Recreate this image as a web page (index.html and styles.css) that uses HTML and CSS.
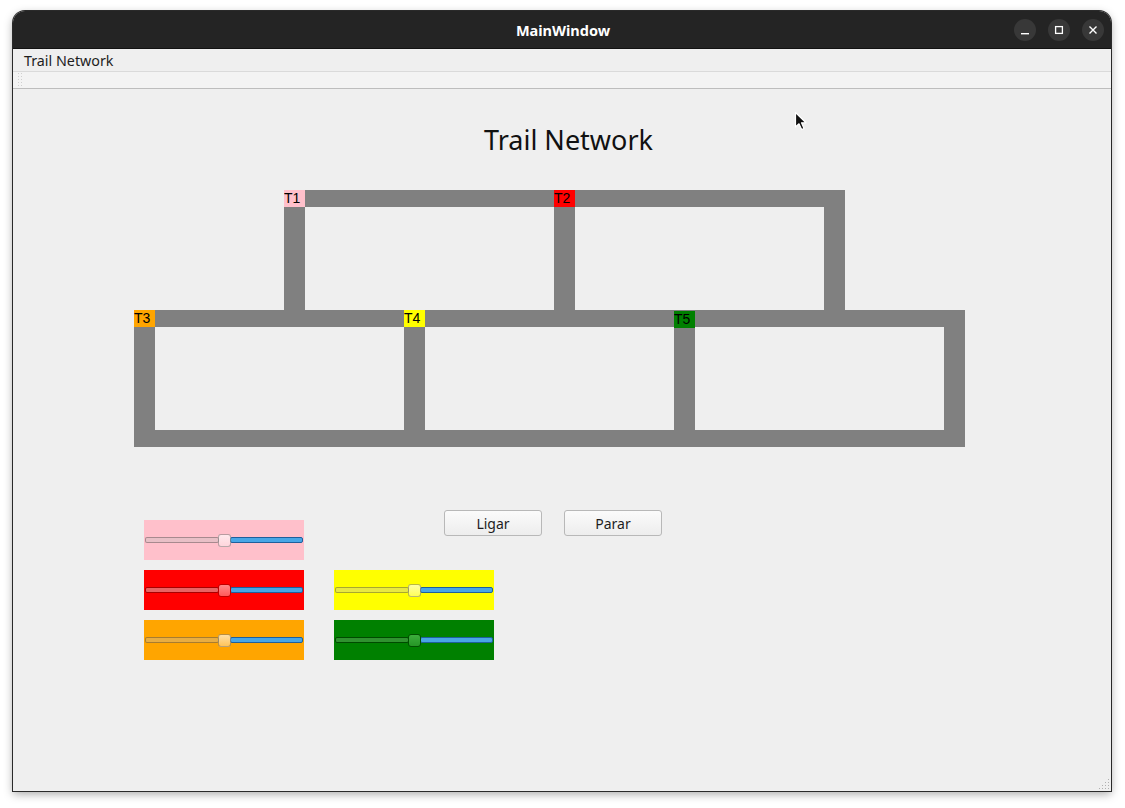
FILE: index.html
```html
<!DOCTYPE html>
<html>
<head>
<meta charset="utf-8">
<link rel="stylesheet" href="styles.css">
</head>
<body>
<div class="window">
  <div class="titlebar">
    <div class="tb-spacer"></div>
    <div class="tb-title">MainWindow</div>
    <div class="tb-buttons">
      <div class="tb-btn"><svg width="22" height="22" viewBox="0 0 22 22"><rect x="7" y="14" width="8" height="1.4" fill="#fff"/></svg></div>
      <div class="tb-btn"><svg width="22" height="22" viewBox="0 0 22 22"><rect x="7.6" y="7.6" width="6.8" height="6.8" fill="none" stroke="#fff" stroke-width="1.3"/></svg></div>
      <div class="tb-btn"><svg width="22" height="22" viewBox="0 0 22 22"><path d="M7.5 7.5 L14.5 14.5 M14.5 7.5 L7.5 14.5" stroke="#fff" stroke-width="1.4"/></svg></div>
    </div>
  </div>
  <div class="menubar"><span class="menu-item">Trail Network</span></div>
  <div class="toolbar"><div class="tb-handle"></div></div>
  <div class="central">
    <div class="heading">Trail Network</div>
    <div class="network">
      <div class="seg h" style="left:150px;top:0;width:561px"></div>
      <div class="seg v" style="left:150px;top:0;height:137px"></div>
      <div class="seg v" style="left:420px;top:0;height:137px"></div>
      <div class="seg v" style="left:690px;top:0;height:137px"></div>
      <div class="seg h" style="left:0;top:120px;width:831px"></div>
      <div class="seg h" style="left:0;top:240px;width:831px"></div>
      <div class="seg v" style="left:0;top:120px;height:137px"></div>
      <div class="seg v" style="left:270px;top:120px;height:137px"></div>
      <div class="seg v" style="left:540px;top:120px;height:137px"></div>
      <div class="seg v" style="left:810px;top:120px;height:137px"></div>
      <div class="train t1" style="left:150px;top:0">T1</div>
      <div class="train t2" style="left:420px;top:0">T2</div>
      <div class="train t3" style="left:0;top:120px">T3</div>
      <div class="train t4" style="left:270px;top:120px">T4</div>
      <div class="train t5" style="left:540px;top:121px">T5</div>
    </div>
    <div class="controls">
      <div class="slider pink c1 r1">
        <div class="groove-l"></div><div class="handle"></div><div class="groove-r"></div>
      </div>
      <div class="buttons">
        <button class="btn">Ligar</button>
        <button class="btn">Parar</button>
      </div>
      <div class="slider red c1 r2">
        <div class="groove-l"></div><div class="handle"></div><div class="groove-r"></div>
      </div>
      <div class="slider yellow c2 r2">
        <div class="groove-l"></div><div class="handle"></div><div class="groove-r"></div>
      </div>
      <div class="slider orange c1 r3">
        <div class="groove-l"></div><div class="handle"></div><div class="groove-r"></div>
      </div>
      <div class="slider green c2 r3">
        <div class="groove-l"></div><div class="handle"></div><div class="groove-r"></div>
      </div>
    </div>
    <svg class="grip" width="12" height="12" viewBox="0 0 12 12">
      <g fill="#b0b0b0">
        <rect x="10" y="1" width="1" height="1"/>
        <rect x="10" y="4" width="1" height="1"/><rect x="7" y="4" width="1" height="1"/>
        <rect x="10" y="7" width="1" height="1"/><rect x="7" y="7" width="1" height="1"/><rect x="4" y="7" width="1" height="1"/>
        <rect x="10" y="10" width="1" height="1"/><rect x="7" y="10" width="1" height="1"/><rect x="4" y="10" width="1" height="1"/><rect x="1" y="10" width="1" height="1"/>
      </g>
    </svg>
  </div>
</div>
<svg class="cursor" width="14" height="22" viewBox="0 0 14 22">
  <path d="M1.5 1.5 L1.5 16 L5 12.8 L7.6 18.6 L10 17.5 L7.5 11.8 L12 11.8 Z" fill="#111" stroke="#fff" stroke-width="1.2" stroke-linejoin="round"/>
</svg>
</body>
</html>
```
FILE: styles.css
```css
html, body {
  margin: 0;
  padding: 0;
  background: #ffffff;
  width: 1125px;
  height: 808px;
  overflow: hidden;
  font-family: "Noto Sans", "DejaVu Sans", sans-serif;
}
.window {
  position: relative;
  margin-left: 13px;
  margin-top: 11px;
  width: 1098px;
  height: 780px;
  border-radius: 12px 12px 0 0;
  overflow: hidden;
  background: #efefef;
  box-shadow: 0 0 0 1px #2a2a2a, 0 3px 10px rgba(0,0,0,0.35);
  display: flex;
  flex-direction: column;
}
.titlebar {
  height: 37px;
  flex: none;
  background: #242424;
  display: grid;
  grid-template-columns: 1fr auto 1fr;
  align-items: center;
  border-bottom: 1px solid #121212;
}
.tb-title {
  color: #ffffff;
  font-weight: 700;
  font-size: 14.5px;
  padding-left: 2px;
}
.tb-buttons {
  display: flex;
  justify-content: flex-end;
  gap: 12px;
  padding-right: 7px;
}
.tb-btn {
  width: 22px;
  height: 22px;
  border-radius: 50%;
  background: #383838;
}
.tb-btn svg { display: block; }
.menubar {
  height: 23px;
  flex: none;
  background: #efefef;
  border-bottom: 1px solid #dadada;
  display: flex;
  align-items: center;
  box-sizing: border-box;
}
.menu-item {
  font-size: 14.3px;
  color: #1e1e1e;
  padding-left: 11px;
}
.toolbar {
  height: 17px;
  flex: none;
  box-sizing: border-box;
  background: #f3f3f3;
  border-bottom: 1px solid #bdbdbd;
  display: flex;
  align-items: center;
}
.tb-handle {
  margin-left: 5px;
  width: 4px;
  height: 15px;
  background-image: radial-gradient(circle at 0.5px 0.5px, #cfcfcf 0.5px, transparent 0.6px);
  background-size: 3px 3px;
}
.central {
  position: relative;
  flex: 1;
  background: #efefef;
}
.heading {
  margin-top: 34px;
  padding-left: 471px;
  height: 34px;
  line-height: 34px;
  font-size: 27px;
  color: #111;
  font-weight: 400;
}
.network {
  position: relative;
  margin-top: 33px;
  margin-left: 121px;
  width: 831px;
  height: 257px;
}
.seg {
  position: absolute;
  background: #808080;
}
.seg.h { height: 17px; }
.seg.v { width: 21px; }
.train {
  position: absolute;
  width: 21px;
  height: 17px;
  line-height: 17px;
  color: #000;
  box-sizing: border-box;
  font-family: "Liberation Sans", "DejaVu Sans", sans-serif;
  font-size: 14px;
  overflow: hidden;
  white-space: nowrap;
}
.t1 { background: #ffc0cb; }
.t2 { background: #ff0000; }
.t3 { background: #ffa500; }
.t4 { background: #ffff00; }
.t5 { background: #008000; }
.controls {
  margin-top: 63px;
  margin-left: 131px;
  display: grid;
  grid-template-columns: 160px 160px;
  grid-template-rows: 50px 40px 40px;
  column-gap: 30px;
  row-gap: 10px;
}
.c1 { grid-column: 1; }
.c2 { grid-column: 2; }
.r1 { grid-row: 1; }
.r2 { grid-row: 2; }
.r3 { grid-row: 3; }
.slider {
  height: 40px;
  box-sizing: border-box;
  padding: 0 1px;
  display: flex;
  align-items: center;
  align-self: end;
}
.pink { background: #ffc0cb; }
.red { background: #ff0000; }
.orange { background: #ffa500; }
.yellow { background: #ffff00; }
.green { background: #008000; }
.groove-l, .groove-r {
  flex: 1;
  height: 6px;
  box-sizing: border-box;
  border-radius: 2px;
}
.groove-l {
  background: rgba(190,190,190,0.35);
  border: 1px solid rgba(0,0,0,0.28);
  margin-right: -1px;
}
.red .groove-l { background: rgba(230,110,110,0.9); border-color: #a80000; }
.green .groove-l { background: rgba(60,150,60,0.8); border-color: #004a00; }
.groove-r {
  background: #48a6e6;
  border: 1px solid #1f5f9c;
  margin-left: -1px;
}
.handle {
  width: 13px;
  height: 13px;
  box-sizing: border-box;
  border-radius: 3px;
  border: 1px solid rgba(0,0,0,0.28);
  background: linear-gradient(rgba(255,255,255,0.65), rgba(255,255,255,0.35));
  position: relative;
  z-index: 1;
}
.red .handle { background: linear-gradient(#ff8a8a, #ff5a5a); border-color: #c00000; }
.green .handle { background: linear-gradient(#3cae3c, #269626); border-color: #005000; }
.buttons {
  grid-column: 2;
  grid-row: 1;
  align-self: start;
  justify-self: start;
  width: max-content;
  padding-left: 110px;
  display: flex;
  gap: 22px;
}
.btn {
  width: 98px;
  height: 26px;
  box-sizing: border-box;
  border: 1px solid #b8b8b8;
  border-radius: 3px;
  background: linear-gradient(#fbfbfb, #ededed);
  font-family: "Noto Sans", "DejaVu Sans", sans-serif;
  font-size: 14px;
  color: #1e1e1e;
  padding: 0;
}
.grip {
  position: absolute;
  right: 1px;
  bottom: 1px;
}
.cursor {
  position: absolute;
  left: 794px;
  top: 111px;
}
```
